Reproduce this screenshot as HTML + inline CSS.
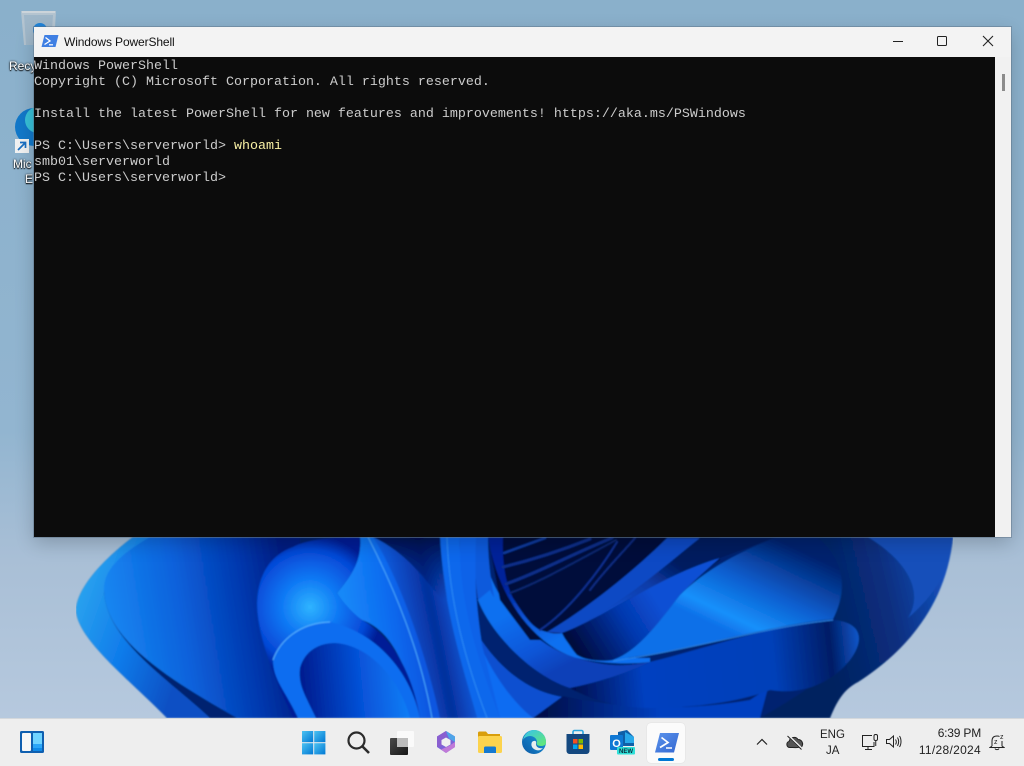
<!DOCTYPE html>
<html><head><meta charset="utf-8"><style>
html,body{margin:0;padding:0;width:1024px;height:766px;overflow:hidden;background:#8fb3cc}
body{position:relative;font-family:"Liberation Sans",sans-serif}
svg{position:absolute;display:block}
.abs{position:absolute;white-space:pre}
#win{position:absolute;left:34px;top:27px;width:977px;height:510px;background:#f3f3f3;box-shadow:0 0 0 1px rgba(90,110,130,.45),0 6px 18px rgba(0,0,0,.2)}
#con{position:absolute;left:0;top:30px;width:961px;height:480px;box-sizing:border-box;padding-top:2px;background:#0c0c0c;color:#ccc;font:13.333px/16px "Liberation Mono",monospace;white-space:pre}
#sb{position:absolute;left:961px;top:30px;width:16px;height:480px;background:#f1f1f1}
#th{position:absolute;left:7px;top:17px;width:3px;height:17px;background:#8b8b8b}
.dl{color:#fff;font-size:12px;text-shadow:0 0 2px #000,0 1px 1px #000}
#tb{position:absolute;left:0;top:718px;width:1024px;height:48px;background:#eeeeee;border-top:1px solid #d4d8dc;box-sizing:border-box}
.t{position:absolute;color:#222;font-size:12px;line-height:14px;white-space:pre}
</style></head><body>
<svg width="1024" height="718" style="left:0;top:0" viewBox="0 0 1024 718">
<defs>
<linearGradient id="bg" x1="0" y1="0" x2="0" y2="1"><stop offset="0" stop-color="#8ab0cb"/><stop offset=".6" stop-color="#92b5d0"/><stop offset=".78" stop-color="#a9bfd6"/><stop offset="1" stop-color="#b6c9de"/></linearGradient>
<linearGradient id="lobeA" x1="76" y1="600" x2="190" y2="640" gradientUnits="userSpaceOnUse"><stop offset="0" stop-color="#2aa2ee"/><stop offset=".5" stop-color="#0f7bea"/><stop offset="1" stop-color="#0a50c4"/></linearGradient>
<linearGradient id="lobeB" x1="105" y1="620" x2="290" y2="590" gradientUnits="userSpaceOnUse"><stop offset="0" stop-color="#1888f2"/><stop offset=".4" stop-color="#0a62dc"/><stop offset=".75" stop-color="#0238ae"/><stop offset="1" stop-color="#001c80"/></linearGradient>
<radialGradient id="foldC" cx="310" cy="607" r="72" gradientUnits="userSpaceOnUse"><stop offset="0" stop-color="#2fb4ff"/><stop offset=".4" stop-color="#0f78f4"/><stop offset=".8" stop-color="#0548d6"/><stop offset="1" stop-color="#001f96"/></radialGradient>
<linearGradient id="inner" x1="300" y1="690" x2="410" y2="680" gradientUnits="userSpaceOnUse"><stop offset="0" stop-color="#001a8c"/><stop offset=".55" stop-color="#0652d8"/><stop offset="1" stop-color="#1280f8"/></linearGradient>
<linearGradient id="b1" x1="345" y1="610" x2="415" y2="600" gradientUnits="userSpaceOnUse"><stop offset="0" stop-color="#1488f8"/><stop offset=".6" stop-color="#0f6cf0"/><stop offset="1" stop-color="#0b56e0"/></linearGradient>
<linearGradient id="b2" x1="395" y1="640" x2="470" y2="625" gradientUnits="userSpaceOnUse"><stop offset="0" stop-color="#0f60e4"/><stop offset=".55" stop-color="#052f9c"/><stop offset="1" stop-color="#1066ec"/></linearGradient>
<linearGradient id="b2t" x1="0" y1="537" x2="0" y2="600" gradientUnits="userSpaceOnUse"><stop offset="0" stop-color="#000c48" stop-opacity=".9"/><stop offset="1" stop-color="#001050" stop-opacity="0"/></linearGradient>
<linearGradient id="s1" x1="505" y1="615" x2="540" y2="680" gradientUnits="userSpaceOnUse"><stop offset="0" stop-color="#1070f0"/><stop offset=".6" stop-color="#0a56d8"/><stop offset="1" stop-color="#0840b8"/></linearGradient>
<linearGradient id="s2" x1="505" y1="585" x2="540" y2="650" gradientUnits="userSpaceOnUse"><stop offset="0" stop-color="#02229a"/><stop offset=".5" stop-color="#0a52d4"/><stop offset="1" stop-color="#1070f0"/></linearGradient>
<linearGradient id="rf" x1="790" y1="545" x2="745" y2="640" gradientUnits="userSpaceOnUse"><stop offset="0" stop-color="#03226e"/><stop offset=".5" stop-color="#0a5fd0"/><stop offset=".85" stop-color="#1790fb"/><stop offset="1" stop-color="#0f70e8"/></linearGradient>
<linearGradient id="dk" x1="580" y1="655" x2="660" y2="605" gradientUnits="userSpaceOnUse"><stop offset="0" stop-color="#000a3c"/><stop offset=".6" stop-color="#0438ae"/><stop offset="1" stop-color="#0a50d4"/></linearGradient>
<linearGradient id="rd" x1="810" y1="590" x2="940" y2="560" gradientUnits="userSpaceOnUse"><stop offset="0" stop-color="#02215e"/><stop offset=".55" stop-color="#082e7e"/><stop offset="1" stop-color="#1450bc"/></linearGradient>
<linearGradient id="rw2" x1="570" y1="680" x2="860" y2="650" gradientUnits="userSpaceOnUse"><stop offset="0" stop-color="#000e4c"/><stop offset=".25" stop-color="#0540c0"/><stop offset=".7" stop-color="#0640b8"/><stop offset=".9" stop-color="#011d66"/><stop offset="1" stop-color="#0d56c8"/></linearGradient>
<linearGradient id="lo" x1="545" y1="712" x2="660" y2="712" gradientUnits="userSpaceOnUse"><stop offset="0" stop-color="#00104c"/><stop offset="1" stop-color="#0640c0"/></linearGradient>
<linearGradient id="wd" x1="610" y1="620" x2="660" y2="550" gradientUnits="userSpaceOnUse"><stop offset="0" stop-color="#0c50d4"/><stop offset=".6" stop-color="#0a3ca8"/><stop offset="1" stop-color="#021a5e"/></linearGradient>
<filter id="bl" x="0" y="0" width="1" height="1"><feGaussianBlur stdDeviation=".8"/></filter>
</defs>
<rect width="1024" height="718" fill="url(#bg)"/>
<g filter="url(#bl)">
<!-- bloom base -->
<path d="M133,537C105,558 76,588 76,611C78,640 130,680 167,718L830,718C838,698 846,688 858,682C900,655 945,610 953,537Z" fill="#02246f"/>
<!-- right outer -->
<path d="M817,537L953,537C946,610 900,655 858,682C846,688 838,698 830,718L760,718C810,690 850,660 857,637L834,618Z" fill="url(#rd)"/>
<path d="M868,537L953,537C950,570 935,595 908,618C925,590 905,560 868,537Z" fill="#1350ba"/>
<!-- band 3 and bottom -->
<path d="M478,635C500,670 530,692 563,697L580,718L500,718Z" fill="#0b50d0"/>
<path d="M533,718L563,696C620,708 680,712 750,700L768,688L760,718Z" fill="url(#lo)"/>
<!-- mid sweep -->
<path d="M570,688C600,682 630,672 650,662C700,650 770,625 833,620C862,622 865,640 850,660C830,685 800,695 770,690C745,700 700,708 650,708C620,708 590,700 570,688Z" fill="url(#rw2)"/>
<!-- band 2 -->
<path d="M478,600C490,632 530,675 570,688C600,682 630,672 650,662C620,668 600,665 577,658C545,650 505,618 488,570Z" fill="url(#s1)"/>
<!-- hole -->
<path d="M488,537H720V560L600,640L530,640L500,600Z" fill="#000a3a"/>
<!-- band 1 hugging the hole -->
<path d="M488,537L503,537C502,560 505,582 513,598C522,612 530,625 540,630C552,634 558,634 562,633C568,642 572,650 577,655C600,658 625,658 650,658L650,662C625,665 600,663 577,658C545,650 500,610 488,537Z" fill="url(#s2)"/>
<!-- stripes in hole -->
<g fill="none" stroke-linecap="round">
<path d="M504,553L545,538" stroke="#0d3aa0" stroke-width="2.500"/>
<path d="M503,567C540,558 570,547 590,539" stroke="#0a2f8a" stroke-width="3"/>
<path d="M506,584C540,572 570,555 612,538" stroke="#0a2f8a" stroke-width="3"/>
<path d="M510,593C540,582 575,562 616,540" stroke="#072670" stroke-width="2"/>
<path d="M590,590C605,570 625,550 635,538" stroke="#0a2a80" stroke-width="2"/>
<path d="M540,630C570,610 600,570 617,542" stroke="#0a2f8e" stroke-width="2"/>
</g>
<!-- wedge -->
<path d="M547,632C585,610 635,570 667,538L700,538C660,570 610,615 562,633Z" fill="#0b48c4"/>
<path d="M562,633C600,620 660,575 720,558L777,537L700,538C660,570 610,615 562,633Z" fill="url(#wd)"/>
<path d="M562,633C600,620 660,575 720,558C700,575 690,585 680,595C660,620 640,650 613,660C600,662 585,660 577,655C570,645 565,640 562,633Z" fill="url(#dk)"/>
<!-- right fold -->
<path d="M613,660C640,650 660,620 680,595C700,575 730,555 777,537L817,537C845,560 848,590 833,619C770,625 690,650 613,660Z" fill="url(#rf)"/>
<path d="M613,661C690,650 770,626 833,620" fill="none" stroke="#2a86ea" stroke-width="1"/>
<!-- bottom-left spiral bands -->
<path d="M478,640C482,670 495,700 500,718L533,718C512,702 490,670 478,640Z" fill="#0e6cf2"/>
<!-- outer swoops -->
<path d="M475,537L488,537C488,585 500,610 490,590L478,600C475,580 474,560 475,537Z" fill="#0c5adc"/>
<path d="M460,537L476,537C474,590 478,615 482,645L500,718L477,718C465,670 458,600 460,537Z" fill="#0f62e8"/>
<path d="M440,537L460,537C458,600 478,660 500,718L477,718C460,660 442,600 440,537Z" fill="#0d67ec"/>
<path d="M447,537C449,600 465,660 487,718" fill="none" stroke="#2c8cf5" stroke-width="1"/>
<!-- middle band -->
<path d="M373,537L440,537C442,600 460,660 477,718L440,718C420,650 402,590 373,537Z" fill="url(#b2)"/>
<path d="M373,537L440,537C442,570 446,590 450,610C425,580 410,555 373,537Z" fill="url(#b2t)"/>
<path d="M360,537L373,537C400,580 425,650 440,718L420,718C405,660 390,630 362,620C350,612 345,605 337,593C352,575 362,560 360,537Z" fill="url(#b1)"/>
<path d="M368,537C395,590 420,650 432,718" fill="none" stroke="#47a8fb" stroke-width="1"/>
<path d="M345,537L360,537C362,560 352,575 337,593C345,570 352,552 345,537Z" fill="#0a42c8"/>
<!-- left lobes -->
<path d="M133,537C105,558 76,588 76,611C78,640 130,680 167,718L210,718C170,680 105,640 104,590C104,570 130,550 155,537Z" fill="url(#lobeA)"/>
<path d="M150,537C122,553 103,570 104,590C105,640 170,680 237,718L300,718L300,537Z" fill="url(#lobeB)"/>
<!-- central fold -->
<path d="M360,537C362,560 352,575 337,593C345,605 355,615 362,620C390,635 412,670 420,718L293,718C280,690 257,640 257,603C258,575 270,555 293,547C305,540 330,537 360,537Z" fill="url(#foldC)"/>
<path d="M273,660C280,640 300,623 330,622C375,632 410,670 420,718L298,718C285,690 273,680 273,660Z" fill="#0e6df0"/>
<path d="M273,660C280,640 300,623 330,622" fill="none" stroke="#55b6ff" stroke-width="1"/>
<path d="M300,668C305,650 320,643 335,643C370,645 400,680 410,718L316,718C305,695 298,685 300,668Z" fill="url(#inner)"/>
</g>
</svg>

<!-- desktop icons -->
<svg width="60" height="45" style="left:8px;top:0" viewBox="0 0 60 45">
<path d="M13,11H48L46,45H16Z" fill="#b4c4d0"/>
<path d="M14,11H47V13H14Z" fill="#ccd4da"/>
<path d="M16,15H45L43,45H18Z" fill="#9fb7c9"/>
<circle cx="32" cy="30" r="7" fill="#1f83d8"/>
</svg>
<svg width="30" height="50" style="left:10px;top:103px" viewBox="0 0 30 50">
<circle cx="24" cy="24" r="19" fill="#1278c9"/><circle cx="28" cy="17" r="13" fill="#37c0d8"/>
<rect x="5" y="36" width="14" height="14" fill="#f2f2f2"/><path d="M8,47L15,40M10,39.500H15.500V45" stroke="#1a6fc2" stroke-width="1.700" fill="none"/>
</svg>
<div class="abs dl" style="left:9px;top:59px">Recy</div>
<div class="abs dl" style="left:13px;top:157px">Mic</div>
<div class="abs dl" style="left:25px;top:172px">E</div>

<div id="win">
<svg width="18" height="14" style="left:7px;top:7px" viewBox="0 0 18 14"><path d="M3.500,1H17.500L14.500,13H.5Z" fill="#3f7fe3"/><path d="M4.500,3.500L9,7L3.500,10.500" fill="none" stroke="#fff" stroke-width="1.300"/><path d="M8,10.800H12" stroke="#fff" stroke-width="1.200"/></svg>
<div class="abs" style="left:30px;top:8px;font-size:12px;line-height:14px;color:#111;letter-spacing:-.12px">Windows PowerShell</div>
<svg width="120" height="30" style="left:857px;top:0" viewBox="0 0 120 30">
<path d="M2,14.500H12" stroke="#222" stroke-width="1"/>
<rect x="46.500" y="9.500" width="9" height="9" rx="1" fill="none" stroke="#222" stroke-width="1"/>
<path d="M92,9L102,19M102,9L92,19" stroke="#222" stroke-width="1.100"/>
</svg>
<div id="con">Windows PowerShell
Copyright (C) Microsoft Corporation. All rights reserved.

Install the latest PowerShell for new features and improvements! https://aka.ms/PSWindows

PS C:\Users\serverworld&gt; <span style="color:#f9f1a5">whoami</span>
smb01\serverworld
PS C:\Users\serverworld&gt;</div>
<div id="sb"><div id="th"></div></div>
</div>

<div id="tb"></div>
<!-- widgets -->
<svg width="26" height="24" style="left:19px;top:730px" viewBox="0 0 26 24">
<rect x="1" y="1" width="24" height="22" rx="1.500" fill="#0f5fb0"/>
<rect x="3" y="3" width="9" height="18" rx="1" fill="#f7f7f7"/>
<rect x="14" y="3" width="9" height="11" fill="#6fd3ff"/><rect x="14" y="14" width="9" height="4" fill="#2ba6f8"/><rect x="14" y="18" width="9" height="3" fill="#0f8ae8"/>
</svg>
<!-- start -->
<svg width="24" height="24" style="left:302px;top:731px" viewBox="0 0 24 24">
<defs><linearGradient id="st" x1="0" y1="0" x2="1" y2="1"><stop offset="0" stop-color="#4cc2f1"/><stop offset="1" stop-color="#0078d4"/></linearGradient></defs>
<rect x="0" y="0" width="11.200" height="11.200" fill="url(#st)"/><rect x="12.200" y="0" width="11.200" height="11.200" fill="url(#st)"/><rect x="0" y="12.200" width="11.200" height="11.200" fill="url(#st)"/><rect x="12.200" y="12.200" width="11.200" height="11.200" fill="url(#st)"/>
</svg>
<!-- search -->
<svg width="24" height="24" style="left:346px;top:730px" viewBox="0 0 24 24"><circle cx="10.500" cy="10.500" r="8" fill="none" stroke="#2b2b2b" stroke-width="2.200"/><path d="M16.500,16.500L23,23" stroke="#2b2b2b" stroke-width="2.600"/></svg>
<!-- task view -->
<svg width="26" height="26" style="left:389px;top:730px" viewBox="0 0 26 26">
<defs><linearGradient id="tv" x1="0" y1="0" x2="1" y2="1"><stop offset="0" stop-color="#4a4a4a"/><stop offset="1" stop-color="#161616"/></linearGradient></defs>
<rect x="1" y="8" width="18" height="17" rx="1" fill="url(#tv)"/><rect x="8" y="1" width="17" height="16" rx="1" fill="#fafafa"/><rect x="8" y="8" width="11" height="9" fill="#bcbcbc"/>
</svg>
<!-- copilot -->
<svg width="22" height="24" style="left:435px;top:730px" viewBox="0 0 22 24">
<path d="M11,1L20,6.500V17L11,23L2,17V6.500Z" fill="#7d63d8"/>
<path d="M11,1L20,6.500V12L14,8.500Z" fill="#4fa4e8"/><path d="M2,6.500L11,1V7L7,9.500V16L2,17Z" fill="#8a5fd0"/><path d="M20,12V17L11,23L6,19.500L14,16Z" fill="#c07ad8"/>
<path d="M11,7.500L15.500,10V14.500L11,17L6.500,14.500V10Z" fill="#f0f0f0"/>
</svg>
<!-- explorer -->
<svg width="26" height="24" style="left:477px;top:730px" viewBox="0 0 26 24">
<path d="M1,3a1.500,1.500 0 0 1 1.500,-1.500H9L11,4H23V9H1Z" fill="#d99e0c"/>
<rect x="1" y="6" width="24" height="17" rx="1.500" fill="#fcd34d"/>
<path d="M7,23V18a1.500,1.500 0 0 1 1.500,-1.500H17.500A1.500,1.500 0 0 1 19,18V23Z" fill="#1479d1"/>
</svg>
<!-- edge -->
<svg width="26" height="26" style="left:521px;top:729px" viewBox="0 0 26 26">
<defs><linearGradient id="eg" x1="0" y1="1" x2="1" y2="0"><stop offset="0" stop-color="#0c59a4"/><stop offset="1" stop-color="#1b9de2"/></linearGradient><linearGradient id="eh" x1="0" y1="0" x2="1" y2="1"><stop offset="0" stop-color="#35c1f1"/><stop offset="1" stop-color="#66eb6e"/></linearGradient></defs>
<circle cx="13" cy="13" r="12" fill="url(#eg)"/>
<path d="M2,11C3,5 8,1 13,1C19,1 25,6 25,13C25,16 23,17 20,17C16,17 15,15 16,13C16,9 12,7 9,7C6,7 3,9 2,11Z" fill="url(#eh)"/>
<path d="M11,13C13,11 16,12 15,14C14.500,18 18,20 22,19C19,22 16,22 13,20C10,18 10,15 11,13Z" fill="#e8eeee"/>
</svg>
<!-- store -->
<svg width="24" height="26" style="left:566px;top:729px" viewBox="0 0 24 26">
<path d="M7,6V3a1.500,1.500 0 0 1 1.500,-1.500H15.500A1.500,1.500 0 0 1 17,3V6" fill="none" stroke="#2aa6e0" stroke-width="1.600"/>
<path d="M0.500,5H23.500V22a3,3 0 0 1 -3,3H3.500a3,3 0 0 1 -3,-3Z" fill="#14487f"/>
<rect x="7" y="10" width="4.500" height="4.500" fill="#f25022"/><rect x="12.500" y="10" width="4.500" height="4.500" fill="#7fba00"/><rect x="7" y="15.500" width="4.500" height="4.500" fill="#00a4ef"/><rect x="12.500" y="15.500" width="4.500" height="4.500" fill="#ffb900"/>
</svg>
<!-- outlook -->
<svg width="26" height="26" style="left:609px;top:729px" viewBox="0 0 26 26">
<path d="M9,3L18,1L25,8V17H9Z" fill="#0f5fa8"/><path d="M16,3L25,8V14L16,14Z" fill="#28a8ea"/>
<rect x="1" y="6" width="13" height="15" rx="1" fill="#0f78d4"/>
<text x="7.500" y="18" font-family="Liberation Sans,sans-serif" font-size="11" font-weight="bold" fill="#fff" text-anchor="middle">O</text>
<rect x="8" y="18" width="18" height="7.500" rx="1" fill="#2fe0d8"/>
<text x="17" y="24" font-family="Liberation Sans,sans-serif" font-size="6" font-weight="bold" fill="#0a2a3a" text-anchor="middle">NEW</text>
</svg>
<!-- powershell button -->
<div style="position:absolute;left:647px;top:723px;width:38px;height:40px;background:#fbfbfb;border-radius:4px;box-shadow:0 0 1px rgba(0,0,0,.15)"></div>
<svg width="26" height="22" style="left:654px;top:732px" viewBox="0 0 26 22">
<defs><linearGradient id="ps" x1="0" y1="0" x2="1" y2="1"><stop offset="0" stop-color="#5b93ec"/><stop offset="1" stop-color="#3367d1"/></linearGradient></defs>
<path d="M6,1H25L20,20.500H1Z" fill="url(#ps)"/><path d="M7.500,5.500L14,10.500L6,15.500" fill="none" stroke="#fff" stroke-width="1.700"/><path d="M12,16H18" stroke="#fff" stroke-width="1.500"/>
</svg>
<div style="position:absolute;left:658px;top:758px;width:16px;height:3px;border-radius:2px;background:#0078d4"></div>
<!-- tray -->
<svg width="12" height="8" style="left:756px;top:738px" viewBox="0 0 12 8"><path d="M1,6.500L6,1.500L11,6.500" fill="none" stroke="#222" stroke-width="1.200"/></svg>
<svg width="20" height="16" style="left:785px;top:734px" viewBox="0 0 20 16"><path d="M5,13.500C1,13.500 1,8 4,7.500C5,3 11,2 13,5.500C17,5.500 19,10 16.500,13C15,14 8,13.500 5,13.500Z" fill="#555" stroke="#222" stroke-width="1"/><path d="M3,1.500L17,15" stroke="#eee" stroke-width="2.400"/><path d="M2.500,2L16.500,15.500" stroke="#222" stroke-width="1"/></svg>
<div class="t" style="left:820px;top:728px;font-size:11.500px">ENG</div>
<div class="t" style="left:826px;top:744px;font-size:11.500px">JA</div>
<svg width="18" height="18" style="left:861px;top:733px" viewBox="0 0 18 18"><path d="M11,2.500H1.500V13.500H13V9" fill="none" stroke="#222" stroke-width="1"/><path d="M4,16.500H11M7,13.500V16.500" stroke="#222" stroke-width="1"/><rect x="13" y="1.500" width="3.500" height="6" rx="1.500" fill="none" stroke="#222"/><path d="M14.750,7.500V13" stroke="#222"/></svg>
<svg width="18" height="16" style="left:885px;top:734px" viewBox="0 0 18 16"><path d="M1.500,5.500H4.500L8.500,2V13L4.500,9.500H1.500Z" fill="none" stroke="#222" stroke-width="1"/><path d="M10.500,5.500C11.500,7 11.500,9 10.500,10.500M12.500,3.500C14,6 14,9 12.500,12M14.500,2C16.500,5 16.500,10 14.500,13" fill="none" stroke="#222" stroke-width="1"/></svg>
<div class="t" style="right:43px;top:726px;text-align:right;letter-spacing:-.2px">6:39 PM</div>
<div class="t" style="right:43px;top:743px;text-align:right;letter-spacing:.3px">11/28/2024</div>
<svg width="16" height="18" style="left:989px;top:733px" viewBox="0 0 16 18"><path d="M3,13V8C3,4.500 5,3 8,3C9,3 10,3.200 10.500,3.500M13,8V13L15,14.500H1L3,13M6,15.500C6.500,17 9.500,17 10,15.500" fill="none" stroke="#222" stroke-width="1"/><text x="5" y="11" font-size="7" font-family="Liberation Sans,sans-serif" fill="#222">z</text><text x="11" y="6" font-size="7" font-family="Liberation Sans,sans-serif" fill="#222">z</text></svg>
</body></html>
